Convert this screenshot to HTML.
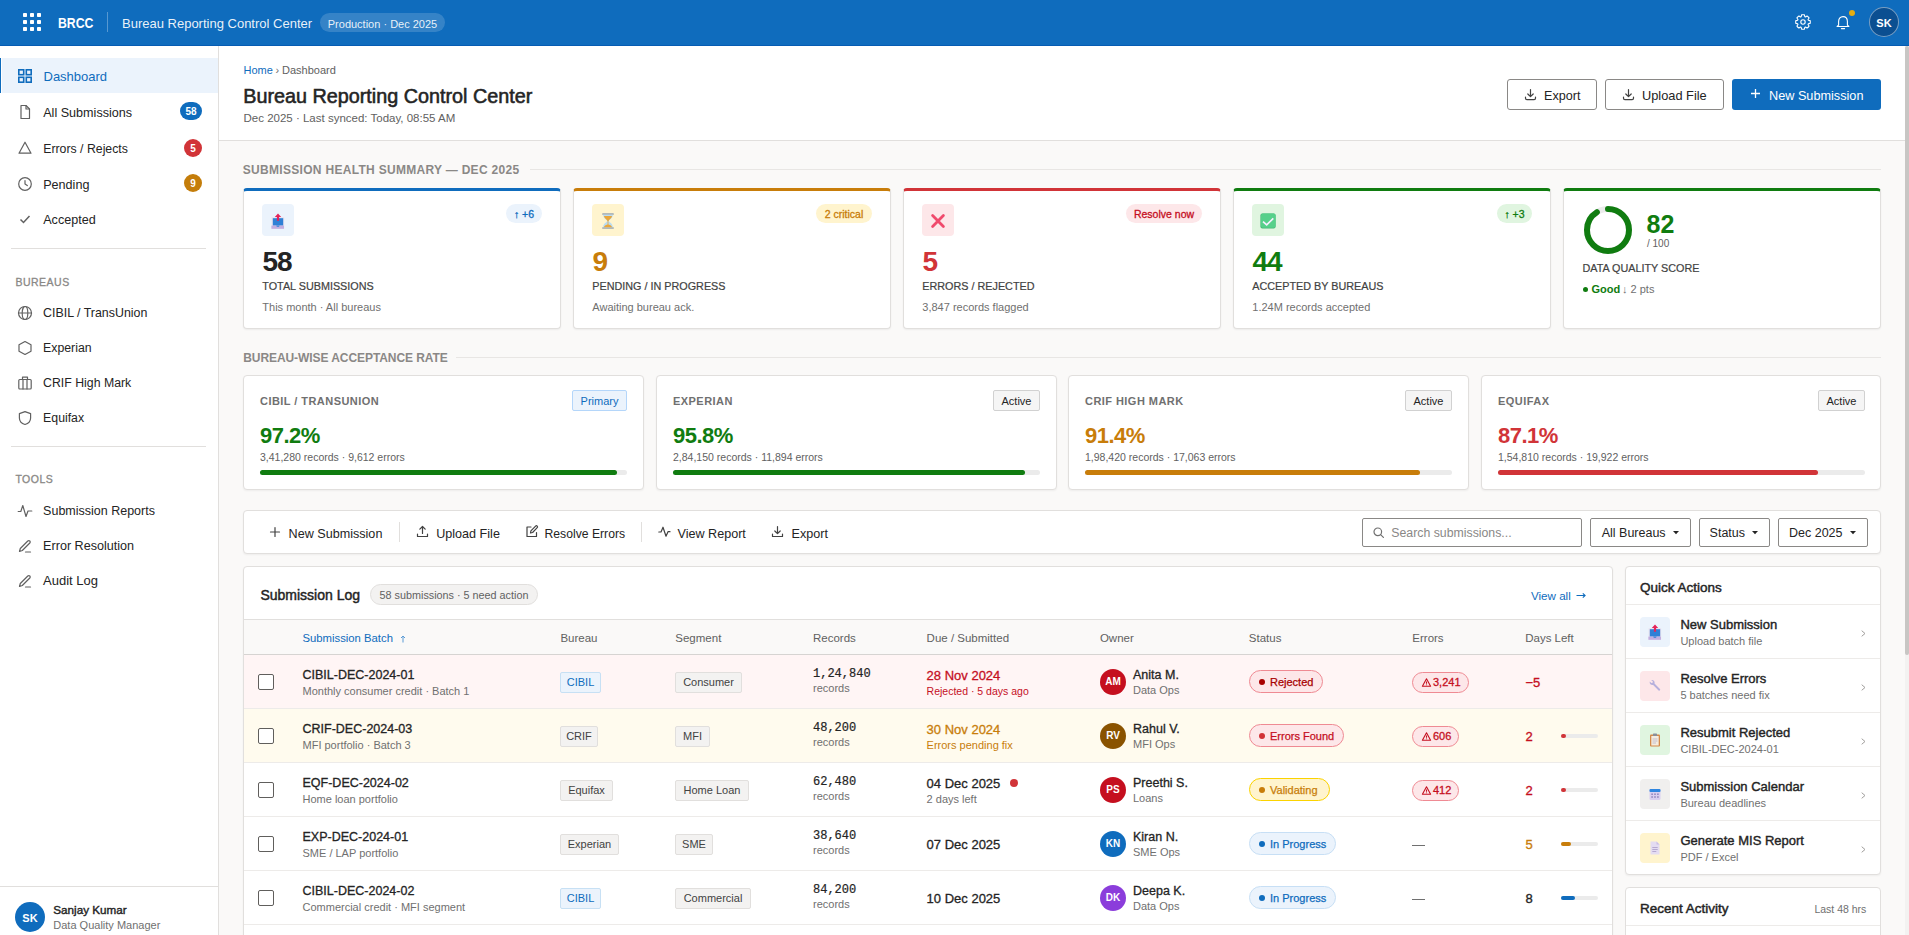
<!DOCTYPE html>
<html><head><meta charset="utf-8"><title>BRCC</title>
<style>
html,body{margin:0;padding:0;}
body{width:1909px;height:935px;overflow:hidden;position:relative;background:#faf9f8;font-family:'Liberation Sans',sans-serif;color:#242424;}
.t{position:absolute;white-space:nowrap;}
.b{position:absolute;box-sizing:border-box;}
svg.b{box-sizing:content-box;overflow:visible;}
</style></head><body>
<div class="b" style="left:0px;top:0px;width:1909px;height:46px;background:#0f6cbd;border-bottom:1px solid #065cb3;"></div><svg class="b" style="left:23px;top:13px;" width="18" height="18" viewBox="0 0 18 18" fill="none"><rect x="0" y="0" width="4" height="4" rx="0.8" fill="#fff"/><rect x="0" y="7" width="4" height="4" rx="0.8" fill="#fff"/><rect x="0" y="14" width="4" height="4" rx="0.8" fill="#fff"/><rect x="7" y="0" width="4" height="4" rx="0.8" fill="#fff"/><rect x="7" y="7" width="4" height="4" rx="0.8" fill="#fff"/><rect x="7" y="14" width="4" height="4" rx="0.8" fill="#fff"/><rect x="14" y="0" width="4" height="4" rx="0.8" fill="#fff"/><rect x="14" y="7" width="4" height="4" rx="0.8" fill="#fff"/><rect x="14" y="14" width="4" height="4" rx="0.8" fill="#fff"/></svg><div class="t" style="left:58.00px;top:15.08px;font-size:15.5px;line-height:15.5px;color:#fff;font-weight:700;transform:scaleX(0.79);transform-origin:0 0;">BRCC</div><div class="b" style="left:107px;top:12px;width:1px;height:20px;background:rgba(255,255,255,0.3);"></div><div class="t" style="left:122.00px;top:16.90px;font-size:13px;line-height:13px;color:rgba(255,255,255,0.92);">Bureau Reporting Control Center</div><div class="b" style="left:320px;top:13px;width:125px;height:19px;background:rgba(255,255,255,0.16);border-radius:9.5px;font-size:11px;line-height:19px;color:rgba(255,255,255,0.9);text-align:center;white-space:nowrap;"><span style="position:relative;top:1.5px">Production · Dec 2025</span></div><svg class="b" style="left:1795px;top:14px;" width="16" height="16" viewBox="0 0 16 16" fill="none"><g stroke="#fff" stroke-width="1.1" fill="none" stroke-linejoin="round"><path d="M6.61 0.83A7.3 7.3 0 0 1 9.39 0.83L9.82 2.71A5.6 5.6 0 0 1 10.45 2.97L12.08 1.95A7.3 7.3 0 0 1 14.05 3.92L13.03 5.55A5.6 5.6 0 0 1 13.29 6.18L15.17 6.61A7.3 7.3 0 0 1 15.17 9.39L13.29 9.82A5.6 5.6 0 0 1 13.03 10.45L14.05 12.08A7.3 7.3 0 0 1 12.08 14.05L10.45 13.03A5.6 5.6 0 0 1 9.82 13.29L9.39 15.17A7.3 7.3 0 0 1 6.61 15.17L6.18 13.29A5.6 5.6 0 0 1 5.55 13.03L3.92 14.05A7.3 7.3 0 0 1 1.95 12.08L2.97 10.45A5.6 5.6 0 0 1 2.71 9.82L0.83 9.39A7.3 7.3 0 0 1 0.83 6.61L2.71 6.18A5.6 5.6 0 0 1 2.97 5.55L1.95 3.92A7.3 7.3 0 0 1 3.92 1.95L5.55 2.97A5.6 5.6 0 0 1 6.18 2.71L6.61 0.83Z"/><circle cx="8" cy="8" r="2.2"/></g></svg><svg class="b" style="left:1835px;top:14px;" width="16" height="16" viewBox="0 0 16 16" fill="none"><g stroke="#fff" stroke-width="1.1" fill="none" stroke-linejoin="round" stroke-linecap="round"><path d="M3.6 11.2V7.6C3.6 4.6 5.5 2.6 8 2.6s4.4 2 4.4 5v3.6l1.5 1.3H2.1z"/><path d="M6.4 14.6h3.2"/></g></svg><div class="b" style="left:1849px;top:10px;width:6px;height:6px;background:#e5ad10;border-radius:50%;"></div><div class="b" style="left:1869px;top:7px;width:30px;height:30px;background:#0b4f91;border-radius:15.0px;border:1px solid rgba(255,255,255,0.45);box-sizing:border-box;font-size:11px;line-height:28px;color:#fff;text-align:center;white-space:nowrap;font-weight:700;"><span style="position:relative;top:1px">SK</span></div><div class="b" style="left:0px;top:46px;width:219px;height:889px;background:#fff;border-right:1px solid #e1dfdd;"></div><div class="b" style="left:2px;top:58px;width:216px;height:35px;background:#ebf3fc;"></div><div class="b" style="left:0px;top:58px;width:1.3px;height:35px;background:#0f6cbd;"></div><svg class="b" style="left:18px;top:69px;" width="14" height="14" viewBox="0 0 14 14" fill="none"><g fill="none" stroke="#0f6cbd" stroke-width="1.6"><rect x="0.8" y="0.8" width="4.9" height="4.9"/><rect x="8.3" y="0.8" width="4.9" height="4.9"/><rect x="0.8" y="8.3" width="4.9" height="4.9"/><rect x="8.3" y="8.3" width="4.9" height="4.9"/></g></svg><div class="t" style="left:43.50px;top:70.20px;font-size:13px;line-height:13px;color:#0f6cbd;">Dashboard</div><svg class="b" style="left:17px;top:104px;" width="16" height="16" viewBox="0 0 16 16" fill="none"><g stroke="#616161" stroke-width="1.2" fill="none" stroke-linejoin="round" stroke-linecap="round"><path d="M4 1.5h5l3.5 3.5v9.5H4z"/><path d="M9 1.5V5h3.5"/></g></svg><div class="t" style="left:43.20px;top:107.13px;font-size:12.6px;line-height:12.6px;color:#242424;">All Submissions</div><div class="b" style="left:180px;top:102px;width:22px;height:18px;background:#0f6cbd;border-radius:9.0px;font-size:10px;line-height:18px;color:#fff;text-align:center;white-space:nowrap;font-weight:700;"><span style="position:relative;top:1px">58</span></div><svg class="b" style="left:17px;top:140px;" width="16" height="16" viewBox="0 0 16 16" fill="none"><g stroke="#616161" stroke-width="1.2" fill="none" stroke-linejoin="round" stroke-linecap="round"><path d="M8 2.2l6 11H2z"/></g></svg><div class="t" style="left:43.20px;top:143.19px;font-size:12.3px;line-height:12.3px;color:#242424;">Errors / Rejects</div><div class="b" style="left:184px;top:138.5px;width:18px;height:18px;background:#d13438;border-radius:9.0px;font-size:10px;line-height:18px;color:#fff;text-align:center;white-space:nowrap;font-weight:700;"><span style="position:relative;top:1px">5</span></div><svg class="b" style="left:17px;top:176px;" width="16" height="16" viewBox="0 0 16 16" fill="none"><g stroke="#616161" stroke-width="1.2" fill="none" stroke-linejoin="round" stroke-linecap="round"><circle cx="8" cy="8" r="6.3"/><path d="M8 4.5V8l2.3 1.6"/></g></svg><div class="t" style="left:43.20px;top:178.73px;font-size:12.6px;line-height:12.6px;color:#242424;">Pending</div><div class="b" style="left:184px;top:174px;width:18px;height:18px;background:#c47d0a;border-radius:9.0px;font-size:10px;line-height:18px;color:#fff;text-align:center;white-space:nowrap;font-weight:700;"><span style="position:relative;top:1px">9</span></div><svg class="b" style="left:17px;top:211px;" width="16" height="16" viewBox="0 0 16 16" fill="none"><path d="M3.5 8.5l3 3 6-6.5" stroke="#616161" stroke-width="1.5" fill="none"/></svg><div class="t" style="left:43.20px;top:214.03px;font-size:12.6px;line-height:12.6px;color:#242424;">Accepted</div><div class="b" style="left:11px;top:248px;width:195px;height:1px;background:#e1dfdd;"></div><div class="t" style="left:15.40px;top:276.51px;font-size:10.5px;line-height:10.5px;color:#8a8886;letter-spacing:0.5px;-webkit-text-stroke:0.3px #8a8886;">BUREAUS</div><svg class="b" style="left:17px;top:305px;" width="16" height="16" viewBox="0 0 16 16" fill="none"><g stroke="#616161" stroke-width="1.2" fill="none" stroke-linejoin="round" stroke-linecap="round"><circle cx="8" cy="8" r="6.5"/><path d="M1.5 8h13"/><ellipse cx="8" cy="8" rx="2.8" ry="6.5"/></g></svg><div class="t" style="left:43.10px;top:306.70px;font-size:12.4px;line-height:12.4px;color:#242424;">CIBIL / TransUnion</div><svg class="b" style="left:17px;top:340px;" width="16" height="16" viewBox="0 0 16 16" fill="none"><g stroke="#616161" stroke-width="1.2" fill="none" stroke-linejoin="round" stroke-linecap="round"><path d="M8 1.5l6 3.3v6.4l-6 3.3-6-3.3V4.8z"/></g></svg><div class="t" style="left:43.10px;top:341.79px;font-size:12.3px;line-height:12.3px;color:#242424;">Experian</div><svg class="b" style="left:17px;top:375px;" width="16" height="16" viewBox="0 0 16 16" fill="none"><g stroke="#616161" stroke-width="1.2" fill="none" stroke-linejoin="round" stroke-linecap="round"><rect x="1.8" y="4.5" width="12.4" height="9.5" rx="1"/><path d="M5.5 4.5V2.2h5v2.3M6 4.5v9.5M10 4.5v9.5"/></g></svg><div class="t" style="left:43.10px;top:376.79px;font-size:12.3px;line-height:12.3px;color:#242424;">CRIF High Mark</div><svg class="b" style="left:17px;top:410px;" width="16" height="16" viewBox="0 0 16 16" fill="none"><g stroke="#616161" stroke-width="1.2" fill="none" stroke-linejoin="round" stroke-linecap="round"><path d="M8 1.6l5.6 2v4.3c0 3.3-2.5 5.6-5.6 6.6-3.1-1-5.6-3.3-5.6-6.6V3.6z"/></g></svg><div class="t" style="left:43.10px;top:411.79px;font-size:12.3px;line-height:12.3px;color:#242424;">Equifax</div><div class="b" style="left:11px;top:446px;width:195px;height:1px;background:#e1dfdd;"></div><div class="t" style="left:15.40px;top:474.11px;font-size:10.5px;line-height:10.5px;color:#8a8886;letter-spacing:0.5px;-webkit-text-stroke:0.3px #8a8886;">TOOLS</div><svg class="b" style="left:17px;top:503px;" width="16" height="16" viewBox="0 0 16 16" fill="none"><g stroke="#616161" stroke-width="1.2" fill="none" stroke-linejoin="round" stroke-linecap="round"><path d="M1.2 8.5h2.6l2-6 3.2 11 2-5.5h3.8"/></g></svg><div class="t" style="left:43.10px;top:504.62px;font-size:12.5px;line-height:12.5px;color:#242424;">Submission Reports</div><svg class="b" style="left:17px;top:538px;" width="16" height="16" viewBox="0 0 16 16" fill="none"><g stroke="#616161" stroke-width="1.2" fill="none" stroke-linejoin="round" stroke-linecap="round"><path d="M2.5 13.5l.8-3L10.8 3a1.4 1.4 0 0 1 2 2l-7.5 7.5z"/><path d="M8.5 14h5"/></g></svg><div class="t" style="left:43.10px;top:539.63px;font-size:12.6px;line-height:12.6px;color:#242424;">Error Resolution</div><svg class="b" style="left:17px;top:573px;" width="16" height="16" viewBox="0 0 16 16" fill="none"><g stroke="#616161" stroke-width="1.2" fill="none" stroke-linejoin="round" stroke-linecap="round"><path d="M2.5 13.5l.8-3L10.8 3a1.4 1.4 0 0 1 2 2l-7.5 7.5z"/><path d="M8.5 14h5"/></g></svg><div class="t" style="left:43.10px;top:574.20px;font-size:13px;line-height:13px;color:#242424;">Audit Log</div><div class="b" style="left:0px;top:886px;width:218px;height:1px;background:#e1dfdd;"></div><div class="b" style="left:15px;top:901.5px;width:30px;height:30px;background:#0f6cbd;border-radius:15.0px;font-size:11px;line-height:30px;color:#fff;text-align:center;white-space:nowrap;font-weight:700;"><span style="position:relative;top:1px">SK</span></div><div class="t" style="left:53.30px;top:903.90px;font-size:11.7px;line-height:11.7px;color:#242424;-webkit-text-stroke:0.4px #242424;">Sanjay Kumar</div><div class="t" style="left:53.30px;top:919.69px;font-size:11px;line-height:11px;color:#707070;">Data Quality Manager</div><div class="b" style="left:219px;top:46px;width:1686px;height:95px;background:#fff;border-bottom:1px solid #e1dfdd;"></div><div class="t" style="left:243.50px;top:64.69px;font-size:11px;line-height:11px;color:#0f6cbd;">Home</div><div class="t" style="left:275.50px;top:64.69px;font-size:11px;line-height:11px;color:#707070;">›</div><div class="t" style="left:282.00px;top:64.69px;font-size:11px;line-height:11px;color:#616161;">Dashboard</div><div class="t" style="left:243.20px;top:87.04px;font-size:19.8px;line-height:19.8px;color:#242424;-webkit-text-stroke:0.55px #242424;">Bureau Reporting Control Center</div><div class="t" style="left:243.50px;top:113.47px;font-size:11.5px;line-height:11.5px;color:#616161;">Dec 2025 · Last synced: Today, 08:55 AM</div><div class="b" style="left:1507px;top:79px;width:90px;height:31px;border:1px solid #8a8886;border-radius:3px;background:#fff;"></div><svg class="b" style="left:1524px;top:87.5px;" width="13" height="13" viewBox="0 0 13 13" fill="none"><g stroke="#424242" stroke-width="1.2" fill="none" stroke-linecap="round" stroke-linejoin="round"><path d="M6.5 1.5v7M3.8 6l2.7 2.7L9.2 6M1.5 9v1.3a1.4 1.4 0 0 0 1.4 1.4h7.2a1.4 1.4 0 0 0 1.4-1.4V9"/></g></svg><div class="t" style="left:1544.00px;top:89.83px;font-size:12.6px;line-height:12.6px;color:#242424;">Export</div><div class="b" style="left:1605px;top:79px;width:119px;height:31px;border:1px solid #8a8886;border-radius:3px;background:#fff;"></div><svg class="b" style="left:1622px;top:87.5px;" width="13" height="13" viewBox="0 0 13 13" fill="none"><g stroke="#424242" stroke-width="1.2" fill="none" stroke-linecap="round" stroke-linejoin="round"><path d="M6.5 1.5v7M3.8 6l2.7 2.7L9.2 6M1.5 9v1.3a1.4 1.4 0 0 0 1.4 1.4h7.2a1.4 1.4 0 0 0 1.4-1.4V9"/></g></svg><div class="t" style="left:1642.00px;top:89.66px;font-size:12.8px;line-height:12.8px;color:#242424;">Upload File</div><div class="b" style="left:1732px;top:79px;width:149px;height:31px;background:#0f6cbd;border-radius:3px;"></div><svg class="b" style="left:1750px;top:88px;" width="11" height="11" viewBox="0 0 11 11" fill="none"><path d="M5.5 1v9M1 5.5h9" stroke="#fff" stroke-width="1.3"/></svg><div class="t" style="left:1769.00px;top:89.75px;font-size:12.7px;line-height:12.7px;color:#fff;">New Submission</div><div class="b" style="left:1905px;top:46px;width:4px;height:889px;background:#f3f2f1;"></div><div class="b" style="left:1905px;top:46px;width:4px;height:609px;background:#c8c6c4;border-radius:3px;"></div><div class="t" style="left:242.80px;top:164.04px;font-size:12px;line-height:12px;color:#8a8886;font-weight:700;letter-spacing:0.3px;">SUBMISSION HEALTH SUMMARY — DEC 2025</div><div class="b" style="left:530px;top:169px;width:1351px;height:1px;background:#e8e6e4;"></div><div class="b" style="left:243px;top:188px;width:318px;height:141px;background:#fff;border:1px solid #e1dfdd;border-top:3px solid #0f6cbd;border-radius:4px;box-shadow:0 1px 2px rgba(0,0,0,0.06);"></div><div class="b" style="left:262px;top:204px;width:32px;height:32px;background:#ebf3fc;border-radius:4px;"></div><svg class="b" style="left:270px;top:213px;" width="16" height="16" viewBox="0 0 16 16" fill="none"><path d="M1.6 4.2h12.6v11.6H1.6z" fill="#e9e2ef"/><path d="M2.8 5.2h10.4v7.4H2.8z" fill="#2f80d6"/><path d="M1.4 12.6h12.6v3.2H1.4z" fill="#c2aee0"/><path d="M6.2 12.6h3.4l-.6 1.2H6.8z" fill="#2f80d6"/><path d="M8 0.6l3.2 3.4H9.1v3.8H6.9V4H4.8z" fill="#e4245a"/></svg><div class="b" style="left:506px;top:204px;width:36px;height:19px;background:#ebf3fc;border-radius:9.5px;font-size:10.5px;line-height:19px;color:#0f6cbd;text-align:center;white-space:nowrap;-webkit-text-stroke:0.3px #0f6cbd;"><span style="position:relative;top:1px">↑ +6</span></div><div class="t" style="left:262.50px;top:247.60px;font-size:28px;line-height:28px;color:#242424;font-weight:700;letter-spacing:-1px;">58</div><div class="t" style="left:262.30px;top:281.16px;font-size:10.8px;line-height:10.8px;color:#424242;-webkit-text-stroke:0.2px #424242;">TOTAL SUBMISSIONS</div><div class="t" style="left:262.30px;top:301.79px;font-size:11px;line-height:11px;color:#707070;">This month · All bureaus</div><div class="b" style="left:573px;top:188px;width:318px;height:141px;background:#fff;border:1px solid #e1dfdd;border-top:3px solid #c87d0a;border-radius:4px;box-shadow:0 1px 2px rgba(0,0,0,0.06);"></div><div class="b" style="left:592px;top:204px;width:32px;height:32px;background:#fff4ce;border-radius:4px;"></div><svg class="b" style="left:600px;top:213px;" width="16" height="16" viewBox="0 0 16 16" fill="none"><rect x="2.2" y="0.3" width="11.6" height="1.5" rx=".5" fill="#9aa5b1"/><rect x="2.2" y="14.2" width="11.6" height="1.5" rx=".5" fill="#9aa5b1"/><path d="M3.2 1.8h9.6c0 3.6-3.2 4.8-4.2 6.2h-1.2C6.4 6.6 3.2 5.4 3.2 1.8z" fill="#b9dcf2"/><path d="M3.9 3h8.2c-.4 2.2-2.8 3.4-3.7 4.9h-.8C6.7 6.4 4.3 5.2 3.9 3z" fill="#eaa63a"/><path d="M3.2 14.2h9.6c0-3.6-3.2-4.8-4.2-6.2h-1.2C6.4 9.4 3.2 10.6 3.2 14.2z" fill="#b9dcf2"/><path d="M3.8 14.2h8.4c-.6-1.6-2.4-2.6-4.2-2.8-1.8.2-3.6 1.2-4.2 2.8z" fill="#eaa63a"/><rect x="7.6" y="7.5" width=".8" height="4.5" fill="#eaa63a"/></svg><div class="b" style="left:816px;top:204px;width:56px;height:19px;background:#fff4ce;border-radius:9.5px;font-size:10.5px;line-height:19px;color:#c87d0a;text-align:center;white-space:nowrap;-webkit-text-stroke:0.3px #c87d0a;"><span style="position:relative;top:1px">2 critical</span></div><div class="t" style="left:592.50px;top:247.60px;font-size:28px;line-height:28px;color:#c87d0a;font-weight:700;letter-spacing:-1px;">9</div><div class="t" style="left:592.30px;top:281.16px;font-size:10.8px;line-height:10.8px;color:#424242;-webkit-text-stroke:0.2px #424242;">PENDING / IN PROGRESS</div><div class="t" style="left:592.30px;top:301.79px;font-size:11px;line-height:11px;color:#707070;">Awaiting bureau ack.</div><div class="b" style="left:903px;top:188px;width:318px;height:141px;background:#fff;border:1px solid #e1dfdd;border-top:3px solid #d13438;border-radius:4px;box-shadow:0 1px 2px rgba(0,0,0,0.06);"></div><div class="b" style="left:922px;top:204px;width:32px;height:32px;background:#fde7e9;border-radius:4px;"></div><svg class="b" style="left:930px;top:213px;" width="16" height="16" viewBox="0 0 16 16" fill="none"><path d="M2.6 2.6l10.8 10.8M13.4 2.6L2.6 13.4" stroke="#f04a6c" stroke-width="2.8" stroke-linecap="round"/></svg><div class="b" style="left:1126px;top:204px;width:76px;height:19px;background:#fde7e9;border-radius:9.5px;font-size:10.5px;line-height:19px;color:#c50f1f;text-align:center;white-space:nowrap;-webkit-text-stroke:0.3px #c50f1f;"><span style="position:relative;top:1px">Resolve now</span></div><div class="t" style="left:922.50px;top:247.60px;font-size:28px;line-height:28px;color:#d13438;font-weight:700;letter-spacing:-1px;">5</div><div class="t" style="left:922.30px;top:281.16px;font-size:10.8px;line-height:10.8px;color:#424242;-webkit-text-stroke:0.2px #424242;">ERRORS / REJECTED</div><div class="t" style="left:922.30px;top:301.79px;font-size:11px;line-height:11px;color:#707070;">3,847 records flagged</div><div class="b" style="left:1233px;top:188px;width:318px;height:141px;background:#fff;border:1px solid #e1dfdd;border-top:3px solid #107c10;border-radius:4px;box-shadow:0 1px 2px rgba(0,0,0,0.06);"></div><div class="b" style="left:1252px;top:204px;width:32px;height:32px;background:#e0f5e0;border-radius:4px;"></div><svg class="b" style="left:1260px;top:213px;" width="16" height="16" viewBox="0 0 16 16" fill="none"><rect x="0.4" y="0.4" width="15.2" height="15.2" rx="2" fill="#45b874"/><rect x="1" y="0.4" width="14.6" height="14.4" rx="2" fill="#56d08a"/><path d="M3 8.6l3.7 3.3 6.6-6.6" stroke="#f7eeff" stroke-width="1.7" fill="none"/></svg><div class="b" style="left:1497px;top:204px;width:35px;height:19px;background:#e0f5e0;border-radius:9.5px;font-size:10.5px;line-height:19px;color:#107c10;text-align:center;white-space:nowrap;-webkit-text-stroke:0.3px #107c10;"><span style="position:relative;top:1px">↑ +3</span></div><div class="t" style="left:1252.50px;top:247.60px;font-size:28px;line-height:28px;color:#107c10;font-weight:700;letter-spacing:-1px;">44</div><div class="t" style="left:1252.30px;top:281.16px;font-size:10.8px;line-height:10.8px;color:#424242;-webkit-text-stroke:0.2px #424242;">ACCEPTED BY BUREAUS</div><div class="t" style="left:1252.30px;top:301.79px;font-size:11px;line-height:11px;color:#707070;">1.24M records accepted</div><div class="b" style="left:1563px;top:188px;width:318px;height:141px;background:#fff;border:1px solid #e1dfdd;border-top:3px solid #107c10;border-radius:4px;box-shadow:0 1px 2px rgba(0,0,0,0.06);"></div><svg class="b" style="left:1584px;top:206px;" width="48" height="48" viewBox="0 0 48 48" fill="none"><circle cx="24" cy="24" r="21" stroke="#ebebeb" stroke-width="6"/><circle cx="24" cy="24" r="21" stroke="#107c10" stroke-width="6" stroke-linecap="round" stroke-dasharray="119.41 131.95" transform="rotate(-90 24 24)"/></svg><div class="t" style="left:1646.50px;top:212.04px;font-size:25px;line-height:25px;color:#107c10;font-weight:700;">82</div><div class="t" style="left:1647.00px;top:238.84px;font-size:10px;line-height:10px;color:#616161;">/ 100</div><div class="t" style="left:1582.50px;top:263.16px;font-size:10.8px;line-height:10.8px;color:#424242;-webkit-text-stroke:0.2px #424242;">DATA QUALITY SCORE</div><div class="b" style="left:1583px;top:287px;width:5px;height:5px;background:#107c10;border-radius:50%;"></div><div class="t" style="left:1591.50px;top:283.69px;font-size:11px;line-height:11px;color:#107c10;font-weight:700;">Good</div><div class="t" style="left:1622.00px;top:283.69px;font-size:11px;line-height:11px;color:#707070;">↓ 2 pts</div><div class="t" style="left:243.20px;top:352.14px;font-size:12px;line-height:12px;color:#8a8886;font-weight:700;letter-spacing:-0.07px;">BUREAU-WISE ACCEPTANCE RATE</div><div class="b" style="left:456px;top:357px;width:1425px;height:1px;background:#e8e6e4;"></div><div class="b" style="left:243px;top:375px;width:401px;height:115px;background:#fff;border:1px solid #e1dfdd;border-radius:4px;box-shadow:0 1px 2px rgba(0,0,0,0.05);"></div><div class="t" style="left:260.00px;top:396.09px;font-size:11px;line-height:11px;color:#707070;font-weight:700;letter-spacing:0.45px;">CIBIL / TRANSUNION</div><div class="b" style="left:572px;top:390px;width:55px;height:21px;background:#ebf3fc;border-radius:2px;border:1px solid #b4d6fa;box-sizing:border-box;font-size:11px;line-height:19px;color:#0f6cbd;text-align:center;white-space:nowrap;"><span style="position:relative;top:0.5px">Primary</span></div><div class="t" style="left:260.00px;top:424.58px;font-size:22px;line-height:22px;color:#107c10;font-weight:700;letter-spacing:-0.5px;">97.2%</div><div class="t" style="left:260.00px;top:452.11px;font-size:10.5px;line-height:10.5px;color:#616161;">3,41,280 records · 9,612 errors</div><div class="b" style="left:260px;top:470px;width:367px;height:5px;background:#ebebeb;border-radius:3px;"></div><div class="b" style="left:260px;top:470px;width:356.7px;height:5px;background:#107c10;border-radius:3px;"></div><div class="b" style="left:656px;top:375px;width:401px;height:115px;background:#fff;border:1px solid #e1dfdd;border-radius:4px;box-shadow:0 1px 2px rgba(0,0,0,0.05);"></div><div class="t" style="left:673.00px;top:396.09px;font-size:11px;line-height:11px;color:#707070;font-weight:700;letter-spacing:0.45px;">EXPERIAN</div><div class="b" style="left:993px;top:390px;width:47px;height:21px;background:#f5f5f5;border-radius:2px;border:1px solid #d1d1d1;box-sizing:border-box;font-size:11px;line-height:19px;color:#242424;text-align:center;white-space:nowrap;"><span style="position:relative;top:0.5px">Active</span></div><div class="t" style="left:673.00px;top:424.58px;font-size:22px;line-height:22px;color:#107c10;font-weight:700;letter-spacing:-0.5px;">95.8%</div><div class="t" style="left:673.00px;top:452.11px;font-size:10.5px;line-height:10.5px;color:#616161;">2,84,150 records · 11,894 errors</div><div class="b" style="left:673px;top:470px;width:367px;height:5px;background:#ebebeb;border-radius:3px;"></div><div class="b" style="left:673px;top:470px;width:351.6px;height:5px;background:#107c10;border-radius:3px;"></div><div class="b" style="left:1068px;top:375px;width:401px;height:115px;background:#fff;border:1px solid #e1dfdd;border-radius:4px;box-shadow:0 1px 2px rgba(0,0,0,0.05);"></div><div class="t" style="left:1085.00px;top:396.09px;font-size:11px;line-height:11px;color:#707070;font-weight:700;letter-spacing:0.45px;">CRIF HIGH MARK</div><div class="b" style="left:1405px;top:390px;width:47px;height:21px;background:#f5f5f5;border-radius:2px;border:1px solid #d1d1d1;box-sizing:border-box;font-size:11px;line-height:19px;color:#242424;text-align:center;white-space:nowrap;"><span style="position:relative;top:0.5px">Active</span></div><div class="t" style="left:1085.00px;top:424.58px;font-size:22px;line-height:22px;color:#c87d0a;font-weight:700;letter-spacing:-0.5px;">91.4%</div><div class="t" style="left:1085.00px;top:452.11px;font-size:10.5px;line-height:10.5px;color:#616161;">1,98,420 records · 17,063 errors</div><div class="b" style="left:1085px;top:470px;width:367px;height:5px;background:#ebebeb;border-radius:3px;"></div><div class="b" style="left:1085px;top:470px;width:335.4px;height:5px;background:#c87d0a;border-radius:3px;"></div><div class="b" style="left:1481px;top:375px;width:400px;height:115px;background:#fff;border:1px solid #e1dfdd;border-radius:4px;box-shadow:0 1px 2px rgba(0,0,0,0.05);"></div><div class="t" style="left:1498.00px;top:396.09px;font-size:11px;line-height:11px;color:#707070;font-weight:700;letter-spacing:0.45px;">EQUIFAX</div><div class="b" style="left:1818px;top:390px;width:47px;height:21px;background:#f5f5f5;border-radius:2px;border:1px solid #d1d1d1;box-sizing:border-box;font-size:11px;line-height:19px;color:#242424;text-align:center;white-space:nowrap;"><span style="position:relative;top:0.5px">Active</span></div><div class="t" style="left:1498.00px;top:424.58px;font-size:22px;line-height:22px;color:#d13438;font-weight:700;letter-spacing:-0.5px;">87.1%</div><div class="t" style="left:1498.00px;top:452.11px;font-size:10.5px;line-height:10.5px;color:#616161;">1,54,810 records · 19,922 errors</div><div class="b" style="left:1498px;top:470px;width:367px;height:5px;background:#ebebeb;border-radius:3px;"></div><div class="b" style="left:1498px;top:470px;width:319.7px;height:5px;background:#d13438;border-radius:3px;"></div><div class="b" style="left:243px;top:510px;width:1638px;height:44px;background:#fff;border:1px solid #e1dfdd;border-radius:4px;box-shadow:0 1px 2px rgba(0,0,0,0.05);"></div><svg class="b" style="left:270px;top:527px;" width="10" height="10" viewBox="0 0 10 10" fill="none"><g stroke="#424242" stroke-width="1.2" fill="none" stroke-linecap="round" stroke-linejoin="round"><path d="M5 0.5v9M0.5 5h9"/></g></svg><div class="t" style="left:288.60px;top:527.63px;font-size:12.6px;line-height:12.6px;color:#242424;">New Submission</div><div class="b" style="left:399px;top:522px;width:1px;height:20px;background:#e1dfdd;"></div><svg class="b" style="left:416px;top:525px;" width="13" height="13" viewBox="0 0 13 13" fill="none"><g stroke="#424242" stroke-width="1.2" fill="none" stroke-linecap="round" stroke-linejoin="round"><path d="M6.5 8.5v-7M3.8 4.2L6.5 1.5l2.7 2.7M1.5 9v2.5h10V9"/></g></svg><div class="t" style="left:436.20px;top:527.63px;font-size:12.6px;line-height:12.6px;color:#242424;">Upload File</div><svg class="b" style="left:525px;top:525px;" width="13" height="13" viewBox="0 0 13 13" fill="none"><g stroke="#424242" stroke-width="1.2" fill="none" stroke-linecap="round" stroke-linejoin="round"><path d="M6 2H2v9.5h9.5V7.5"/><path d="M5.5 8l.4-2.2L10.6 1.1a1.1 1.1 0 0 1 1.6 1.6L7.6 7.5z"/></g></svg><div class="t" style="left:544.50px;top:527.97px;font-size:12.2px;line-height:12.2px;color:#242424;">Resolve Errors</div><div class="b" style="left:641px;top:522px;width:1px;height:20px;background:#e1dfdd;"></div><svg class="b" style="left:658px;top:525px;" width="13" height="13" viewBox="0 0 13 13" fill="none"><g stroke="#424242" stroke-width="1.2" fill="none" stroke-linecap="round" stroke-linejoin="round"><path d="M0.8 7h2.2L5 2.2l3 9 2-4.5h2"/></g></svg><div class="t" style="left:677.50px;top:527.63px;font-size:12.6px;line-height:12.6px;color:#242424;">View Report</div><svg class="b" style="left:771px;top:525px;" width="13" height="13" viewBox="0 0 13 13" fill="none"><g stroke="#424242" stroke-width="1.2" fill="none" stroke-linecap="round" stroke-linejoin="round"><path d="M6.5 1.5v7M3.8 6l2.7 2.7L9.2 6M1.5 9v2.5h10V9"/></g></svg><div class="t" style="left:791.50px;top:527.63px;font-size:12.6px;line-height:12.6px;color:#242424;">Export</div><div class="b" style="left:1362px;top:518px;width:220px;height:29px;border:1px solid #8a8886;border-radius:2px;background:#fff;"></div><svg class="b" style="left:1373px;top:527px;" width="11" height="11" viewBox="0 0 11 11" fill="none"><g stroke="#707070" stroke-width="1.2" fill="none"><circle cx="4.8" cy="4.8" r="3.8"/><path d="M7.6 7.6l2.8 2.8" stroke-linecap="round"/></g></svg><div class="t" style="left:1391.30px;top:526.89px;font-size:12.3px;line-height:12.3px;color:#8a8886;">Search submissions...</div><div class="b" style="left:1590px;top:518px;width:101px;height:29px;border:1px solid #8a8886;border-radius:2px;background:#fff;"></div><div class="t" style="left:1601.70px;top:526.72px;font-size:12.5px;line-height:12.5px;color:#242424;">All Bureaus</div><svg class="b" style="left:1673px;top:531px;" width="6" height="4" viewBox="0 0 6 4" fill="none"><path d="M0 0h6L3 3.2z" fill="#242424"/></svg><div class="b" style="left:1699px;top:518px;width:71px;height:29px;border:1px solid #8a8886;border-radius:2px;background:#fff;"></div><div class="t" style="left:1709.60px;top:526.72px;font-size:12.5px;line-height:12.5px;color:#242424;">Status</div><svg class="b" style="left:1752px;top:531px;" width="6" height="4" viewBox="0 0 6 4" fill="none"><path d="M0 0h6L3 3.2z" fill="#242424"/></svg><div class="b" style="left:1778px;top:518px;width:90px;height:29px;border:1px solid #8a8886;border-radius:2px;background:#fff;"></div><div class="t" style="left:1789.00px;top:526.72px;font-size:12.5px;line-height:12.5px;color:#242424;">Dec 2025</div><svg class="b" style="left:1850px;top:531px;" width="6" height="4" viewBox="0 0 6 4" fill="none"><path d="M0 0h6L3 3.2z" fill="#242424"/></svg><div class="b" style="left:243px;top:566px;width:1370px;height:380px;background:#fff;border:1px solid #e1dfdd;border-radius:4px;box-shadow:0 1px 2px rgba(0,0,0,0.05);"></div><div class="t" style="left:260.40px;top:588.45px;font-size:14px;line-height:14px;color:#242424;-webkit-text-stroke:0.45px #242424;">Submission Log</div><div class="b" style="left:370px;top:584px;width:168px;height:21px;background:#f3f2f1;border-radius:10.5px;border:1px solid #e1dfdd;box-sizing:border-box;font-size:10.8px;line-height:19px;color:#616161;text-align:center;white-space:nowrap;"><span style="position:relative;top:1px">58 submissions · 5 need action</span></div><div class="t" style="left:1531.00px;top:589.68px;font-size:11.6px;line-height:11.6px;color:#0f6cbd;">View all</div><svg class="b" style="left:1576px;top:592px;" width="10" height="7" viewBox="0 0 10 7" fill="none"><path d="M0.5 3.5h8.6M6.8 1.3l2.3 2.2-2.3 2.2" stroke="#0f6cbd" stroke-width="1.1" fill="none"/></svg><div class="b" style="left:244px;top:619px;width:1368px;height:36px;background:#faf9f8;border-top:1px solid #e1dfdd;border-bottom:1px solid #d6d4d2;"></div><div class="t" style="left:302.50px;top:633.43px;font-size:11.3px;line-height:11.3px;color:#0f6cbd;">Submission Batch</div><svg class="b" style="left:400px;top:635px;" width="6" height="8" viewBox="0 0 6 8" fill="none"><path d="M3 7.5V1M1 3l2-2 2 2" stroke="#5b9bd5" stroke-width="1" fill="none"/></svg><div class="t" style="left:560.40px;top:633.27px;font-size:11.5px;line-height:11.5px;color:#616161;">Bureau</div><div class="t" style="left:675.30px;top:633.27px;font-size:11.5px;line-height:11.5px;color:#616161;">Segment</div><div class="t" style="left:813.00px;top:633.27px;font-size:11.5px;line-height:11.5px;color:#616161;">Records</div><div class="t" style="left:926.60px;top:633.27px;font-size:11.5px;line-height:11.5px;color:#616161;">Due / Submitted</div><div class="t" style="left:1099.90px;top:633.27px;font-size:11.5px;line-height:11.5px;color:#616161;">Owner</div><div class="t" style="left:1248.80px;top:633.27px;font-size:11.5px;line-height:11.5px;color:#616161;">Status</div><div class="t" style="left:1412.30px;top:633.27px;font-size:11.5px;line-height:11.5px;color:#616161;">Errors</div><div class="t" style="left:1525.20px;top:633.27px;font-size:11.5px;line-height:11.5px;color:#616161;">Days Left</div><div class="b" style="left:244px;top:655px;width:1368px;height:54px;background:#fff5f5;border-bottom:1px solid #edebe9;"></div><div class="b" style="left:258px;top:674px;width:16px;height:16px;border:1px solid #605e5c;border-radius:2px;background:#fff;"></div><div class="t" style="left:302.50px;top:668.62px;font-size:12.5px;line-height:12.5px;color:#242424;-webkit-text-stroke:0.3px #242424;">CIBIL-DEC-2024-01</div><div class="t" style="left:302.50px;top:685.89px;font-size:11px;line-height:11px;color:#707070;">Monthly consumer credit · Batch 1</div><div class="b" style="left:560px;top:672px;width:41px;height:21px;background:#ebf3fc;border-radius:2px;border:1px solid #c7e0f4;box-sizing:border-box;font-size:11px;line-height:19px;color:#0f6cbd;text-align:center;white-space:nowrap;">CIBIL</div><div class="b" style="left:675px;top:672px;width:67px;height:21px;background:#f3f2f1;border-radius:2px;border:1px solid #e1dfdd;box-sizing:border-box;font-size:11px;line-height:19px;color:#424242;text-align:center;white-space:nowrap;">Consumer</div><div class="t" style="left:813.00px;top:668.11px;font-size:12px;line-height:12px;color:#242424;font-family:'Liberation Mono',monospace;-webkit-text-stroke:0.2px #242424;">1,24,840</div><div class="t" style="left:813.00px;top:683.49px;font-size:11px;line-height:11px;color:#707070;">records</div><div class="t" style="left:926.60px;top:668.60px;font-size:13px;line-height:13px;color:#c50f1f;-webkit-text-stroke:0.3px #c50f1f;">28 Nov 2024</div><div class="t" style="left:926.60px;top:686.11px;font-size:10.5px;line-height:10.5px;color:#c50f1f;">Rejected · 5 days ago</div><div class="b" style="left:1100px;top:669px;width:26px;height:26px;background:#c50f1f;border-radius:13.0px;font-size:10px;line-height:26px;color:#fff;text-align:center;white-space:nowrap;font-weight:700;">AM</div><div class="t" style="left:1133.00px;top:668.62px;font-size:12.5px;line-height:12.5px;color:#242424;-webkit-text-stroke:0.3px #242424;">Anita M.</div><div class="t" style="left:1133.00px;top:685.09px;font-size:11px;line-height:11px;color:#707070;">Data Ops</div><div class="b" style="left:1249px;top:670px;width:74px;height:23px;background:#fde7e9;border:1px solid #ef8a93;border-radius:12px;"></div><div class="b" style="left:1259px;top:679px;width:6px;height:6px;background:#a80000;border-radius:50%;"></div><div class="t" style="left:1270.00px;top:676.69px;font-size:11px;line-height:11px;color:#a80000;-webkit-text-stroke:0.25px #a80000;">Rejected</div><div class="b" style="left:1412px;top:671.5px;width:57px;height:21px;background:#fde7e9;border:1px solid #ef8a93;border-radius:11px;"></div><svg class="b" style="left:1422px;top:677.5px;" width="9" height="9" viewBox="0 0 9 9" fill="none"><path d="M4.5 0.8L8.6 8.2H0.4z" fill="none" stroke="#c50f1f" stroke-width="1.1" stroke-linejoin="round"/><path d="M4.5 3.4v2.4M4.5 6.6v.7" stroke="#c50f1f" stroke-width="1.1"/></svg><div class="t" style="left:1433.00px;top:676.99px;font-size:11px;line-height:11px;color:#c50f1f;-webkit-text-stroke:0.3px #c50f1f;">3,241</div><div class="t" style="left:1525.50px;top:675.60px;font-size:13px;line-height:13px;color:#c50f1f;-webkit-text-stroke:0.35px #c50f1f;">−5</div><div class="b" style="left:244px;top:709px;width:1368px;height:54px;background:#fffbee;border-bottom:1px solid #edebe9;"></div><div class="b" style="left:258px;top:728px;width:16px;height:16px;border:1px solid #605e5c;border-radius:2px;background:#fff;"></div><div class="t" style="left:302.50px;top:722.62px;font-size:12.5px;line-height:12.5px;color:#242424;-webkit-text-stroke:0.3px #242424;">CRIF-DEC-2024-03</div><div class="t" style="left:302.50px;top:739.89px;font-size:11px;line-height:11px;color:#707070;">MFI portfolio · Batch 3</div><div class="b" style="left:560px;top:726px;width:38px;height:21px;background:#f3f2f1;border-radius:2px;border:1px solid #e1dfdd;box-sizing:border-box;font-size:11px;line-height:19px;color:#424242;text-align:center;white-space:nowrap;">CRIF</div><div class="b" style="left:675px;top:726px;width:35px;height:21px;background:#f3f2f1;border-radius:2px;border:1px solid #e1dfdd;box-sizing:border-box;font-size:11px;line-height:19px;color:#424242;text-align:center;white-space:nowrap;">MFI</div><div class="t" style="left:813.00px;top:722.11px;font-size:12px;line-height:12px;color:#242424;font-family:'Liberation Mono',monospace;-webkit-text-stroke:0.2px #242424;">48,200</div><div class="t" style="left:813.00px;top:737.49px;font-size:11px;line-height:11px;color:#707070;">records</div><div class="t" style="left:926.60px;top:722.60px;font-size:13px;line-height:13px;color:#c87d0a;-webkit-text-stroke:0.3px #c87d0a;">30 Nov 2024</div><div class="t" style="left:926.60px;top:739.69px;font-size:11px;line-height:11px;color:#c87d0a;">Errors pending fix</div><div class="b" style="left:1100px;top:723px;width:26px;height:26px;background:#8a5300;border-radius:13.0px;font-size:10px;line-height:26px;color:#fff;text-align:center;white-space:nowrap;font-weight:700;">RV</div><div class="t" style="left:1133.00px;top:722.62px;font-size:12.5px;line-height:12.5px;color:#242424;-webkit-text-stroke:0.3px #242424;">Rahul V.</div><div class="t" style="left:1133.00px;top:739.09px;font-size:11px;line-height:11px;color:#707070;">MFI Ops</div><div class="b" style="left:1249px;top:724px;width:95px;height:23px;background:#fde7e9;border:1px solid #ef8a93;border-radius:12px;"></div><div class="b" style="left:1259px;top:733px;width:6px;height:6px;background:#d13438;border-radius:50%;"></div><div class="t" style="left:1270.00px;top:730.69px;font-size:11px;line-height:11px;color:#c50f1f;-webkit-text-stroke:0.25px #c50f1f;">Errors Found</div><div class="b" style="left:1412px;top:725.5px;width:47px;height:21px;background:#fde7e9;border:1px solid #ef8a93;border-radius:11px;"></div><svg class="b" style="left:1422px;top:731.5px;" width="9" height="9" viewBox="0 0 9 9" fill="none"><path d="M4.5 0.8L8.6 8.2H0.4z" fill="none" stroke="#c50f1f" stroke-width="1.1" stroke-linejoin="round"/><path d="M4.5 3.4v2.4M4.5 6.6v.7" stroke="#c50f1f" stroke-width="1.1"/></svg><div class="t" style="left:1433.00px;top:730.99px;font-size:11px;line-height:11px;color:#c50f1f;-webkit-text-stroke:0.3px #c50f1f;">606</div><div class="t" style="left:1525.50px;top:729.60px;font-size:13px;line-height:13px;color:#c50f1f;-webkit-text-stroke:0.35px #c50f1f;">2</div><div class="b" style="left:1561px;top:734px;width:37px;height:4px;background:#ebebeb;border-radius:2px;"></div><div class="b" style="left:1561px;top:734px;width:5px;height:4px;background:#d13438;border-radius:2px;"></div><div class="b" style="left:244px;top:763px;width:1368px;height:54px;background:#fff;border-bottom:1px solid #edebe9;"></div><div class="b" style="left:258px;top:782px;width:16px;height:16px;border:1px solid #605e5c;border-radius:2px;background:#fff;"></div><div class="t" style="left:302.50px;top:776.62px;font-size:12.5px;line-height:12.5px;color:#242424;-webkit-text-stroke:0.3px #242424;">EQF-DEC-2024-02</div><div class="t" style="left:302.50px;top:793.89px;font-size:11px;line-height:11px;color:#707070;">Home loan portfolio</div><div class="b" style="left:560px;top:780px;width:53px;height:21px;background:#f3f2f1;border-radius:2px;border:1px solid #e1dfdd;box-sizing:border-box;font-size:11px;line-height:19px;color:#424242;text-align:center;white-space:nowrap;">Equifax</div><div class="b" style="left:675px;top:780px;width:74px;height:21px;background:#f3f2f1;border-radius:2px;border:1px solid #e1dfdd;box-sizing:border-box;font-size:11px;line-height:19px;color:#424242;text-align:center;white-space:nowrap;">Home Loan</div><div class="t" style="left:813.00px;top:776.11px;font-size:12px;line-height:12px;color:#242424;font-family:'Liberation Mono',monospace;-webkit-text-stroke:0.2px #242424;">62,480</div><div class="t" style="left:813.00px;top:791.49px;font-size:11px;line-height:11px;color:#707070;">records</div><div class="t" style="left:926.60px;top:776.60px;font-size:13px;line-height:13px;color:#242424;-webkit-text-stroke:0.3px #242424;">04 Dec 2025</div><div class="t" style="left:926.60px;top:793.69px;font-size:11px;line-height:11px;color:#707070;">2 days left</div><div class="b" style="left:1010px;top:779px;width:8px;height:8px;background:#d13438;border-radius:50%;"></div><div class="b" style="left:1100px;top:777px;width:26px;height:26px;background:#c50f1f;border-radius:13.0px;font-size:10px;line-height:26px;color:#fff;text-align:center;white-space:nowrap;font-weight:700;">PS</div><div class="t" style="left:1133.00px;top:776.62px;font-size:12.5px;line-height:12.5px;color:#242424;-webkit-text-stroke:0.3px #242424;">Preethi S.</div><div class="t" style="left:1133.00px;top:793.09px;font-size:11px;line-height:11px;color:#707070;">Loans</div><div class="b" style="left:1249px;top:778px;width:81px;height:23px;background:#fff4ce;border:1px solid #fbd300;border-radius:12px;"></div><div class="b" style="left:1259px;top:787px;width:6px;height:6px;background:#c87d0a;border-radius:50%;"></div><div class="t" style="left:1270.00px;top:784.69px;font-size:11px;line-height:11px;color:#c87d0a;-webkit-text-stroke:0.25px #c87d0a;">Validating</div><div class="b" style="left:1412px;top:779.5px;width:47px;height:21px;background:#fde7e9;border:1px solid #ef8a93;border-radius:11px;"></div><svg class="b" style="left:1422px;top:785.5px;" width="9" height="9" viewBox="0 0 9 9" fill="none"><path d="M4.5 0.8L8.6 8.2H0.4z" fill="none" stroke="#c50f1f" stroke-width="1.1" stroke-linejoin="round"/><path d="M4.5 3.4v2.4M4.5 6.6v.7" stroke="#c50f1f" stroke-width="1.1"/></svg><div class="t" style="left:1433.00px;top:784.99px;font-size:11px;line-height:11px;color:#c50f1f;-webkit-text-stroke:0.3px #c50f1f;">412</div><div class="t" style="left:1525.50px;top:783.60px;font-size:13px;line-height:13px;color:#c50f1f;-webkit-text-stroke:0.35px #c50f1f;">2</div><div class="b" style="left:1561px;top:788px;width:37px;height:4px;background:#ebebeb;border-radius:2px;"></div><div class="b" style="left:1561px;top:788px;width:5px;height:4px;background:#d13438;border-radius:2px;"></div><div class="b" style="left:244px;top:817px;width:1368px;height:54px;background:#fff;border-bottom:1px solid #edebe9;"></div><div class="b" style="left:258px;top:836px;width:16px;height:16px;border:1px solid #605e5c;border-radius:2px;background:#fff;"></div><div class="t" style="left:302.50px;top:830.62px;font-size:12.5px;line-height:12.5px;color:#242424;-webkit-text-stroke:0.3px #242424;">EXP-DEC-2024-01</div><div class="t" style="left:302.50px;top:847.89px;font-size:11px;line-height:11px;color:#707070;">SME / LAP portfolio</div><div class="b" style="left:560px;top:834px;width:59px;height:21px;background:#f3f2f1;border-radius:2px;border:1px solid #e1dfdd;box-sizing:border-box;font-size:11px;line-height:19px;color:#424242;text-align:center;white-space:nowrap;">Experian</div><div class="b" style="left:675px;top:834px;width:38px;height:21px;background:#f3f2f1;border-radius:2px;border:1px solid #e1dfdd;box-sizing:border-box;font-size:11px;line-height:19px;color:#424242;text-align:center;white-space:nowrap;">SME</div><div class="t" style="left:813.00px;top:830.11px;font-size:12px;line-height:12px;color:#242424;font-family:'Liberation Mono',monospace;-webkit-text-stroke:0.2px #242424;">38,640</div><div class="t" style="left:813.00px;top:845.49px;font-size:11px;line-height:11px;color:#707070;">records</div><div class="t" style="left:926.60px;top:838.30px;font-size:13px;line-height:13px;color:#242424;-webkit-text-stroke:0.3px #242424;">07 Dec 2025</div><div class="b" style="left:1100px;top:831px;width:26px;height:26px;background:#0f6cbd;border-radius:13.0px;font-size:10px;line-height:26px;color:#fff;text-align:center;white-space:nowrap;font-weight:700;">KN</div><div class="t" style="left:1133.00px;top:830.62px;font-size:12.5px;line-height:12.5px;color:#242424;-webkit-text-stroke:0.3px #242424;">Kiran N.</div><div class="t" style="left:1133.00px;top:847.09px;font-size:11px;line-height:11px;color:#707070;">SME Ops</div><div class="b" style="left:1249px;top:832px;width:87px;height:23px;background:#ebf3fc;border:1px solid #c7dff5;border-radius:12px;"></div><div class="b" style="left:1259px;top:841px;width:6px;height:6px;background:#0f6cbd;border-radius:50%;"></div><div class="t" style="left:1270.00px;top:838.69px;font-size:11px;line-height:11px;color:#0f6cbd;-webkit-text-stroke:0.25px #0f6cbd;">In Progress</div><div class="b" style="left:1412px;top:845px;width:13px;height:1px;background:#707070;"></div><div class="t" style="left:1525.50px;top:837.60px;font-size:13px;line-height:13px;color:#c87d0a;-webkit-text-stroke:0.35px #c87d0a;">5</div><div class="b" style="left:1561px;top:842px;width:37px;height:4px;background:#ebebeb;border-radius:2px;"></div><div class="b" style="left:1561px;top:842px;width:10px;height:4px;background:#c87d0a;border-radius:2px;"></div><div class="b" style="left:244px;top:871px;width:1368px;height:54px;background:#fff;border-bottom:1px solid #edebe9;"></div><div class="b" style="left:258px;top:890px;width:16px;height:16px;border:1px solid #605e5c;border-radius:2px;background:#fff;"></div><div class="t" style="left:302.50px;top:884.62px;font-size:12.5px;line-height:12.5px;color:#242424;-webkit-text-stroke:0.3px #242424;">CIBIL-DEC-2024-02</div><div class="t" style="left:302.50px;top:901.89px;font-size:11px;line-height:11px;color:#707070;">Commercial credit · MFI segment</div><div class="b" style="left:560px;top:888px;width:41px;height:21px;background:#ebf3fc;border-radius:2px;border:1px solid #c7e0f4;box-sizing:border-box;font-size:11px;line-height:19px;color:#0f6cbd;text-align:center;white-space:nowrap;">CIBIL</div><div class="b" style="left:675px;top:888px;width:76px;height:21px;background:#f3f2f1;border-radius:2px;border:1px solid #e1dfdd;box-sizing:border-box;font-size:11px;line-height:19px;color:#424242;text-align:center;white-space:nowrap;">Commercial</div><div class="t" style="left:813.00px;top:884.11px;font-size:12px;line-height:12px;color:#242424;font-family:'Liberation Mono',monospace;-webkit-text-stroke:0.2px #242424;">84,200</div><div class="t" style="left:813.00px;top:899.49px;font-size:11px;line-height:11px;color:#707070;">records</div><div class="t" style="left:926.60px;top:892.30px;font-size:13px;line-height:13px;color:#242424;-webkit-text-stroke:0.3px #242424;">10 Dec 2025</div><div class="b" style="left:1100px;top:885px;width:26px;height:26px;background:#8b3ddb;border-radius:13.0px;font-size:10px;line-height:26px;color:#fff;text-align:center;white-space:nowrap;font-weight:700;">DK</div><div class="t" style="left:1133.00px;top:884.62px;font-size:12.5px;line-height:12.5px;color:#242424;-webkit-text-stroke:0.3px #242424;">Deepa K.</div><div class="t" style="left:1133.00px;top:901.09px;font-size:11px;line-height:11px;color:#707070;">Data Ops</div><div class="b" style="left:1249px;top:886px;width:87px;height:23px;background:#ebf3fc;border:1px solid #c7dff5;border-radius:12px;"></div><div class="b" style="left:1259px;top:895px;width:6px;height:6px;background:#0f6cbd;border-radius:50%;"></div><div class="t" style="left:1270.00px;top:892.69px;font-size:11px;line-height:11px;color:#0f6cbd;-webkit-text-stroke:0.25px #0f6cbd;">In Progress</div><div class="b" style="left:1412px;top:899px;width:13px;height:1px;background:#707070;"></div><div class="t" style="left:1525.50px;top:891.60px;font-size:13px;line-height:13px;color:#242424;-webkit-text-stroke:0.35px #242424;">8</div><div class="b" style="left:1561px;top:896px;width:37px;height:4px;background:#ebebeb;border-radius:2px;"></div><div class="b" style="left:1561px;top:896px;width:14px;height:4px;background:#0f6cbd;border-radius:2px;"></div><div class="b" style="left:244px;top:925px;width:1368px;height:10px;background:#fff;"></div><div class="b" style="left:1625px;top:566px;width:256px;height:309px;background:#fff;border:1px solid #e1dfdd;border-radius:4px;box-shadow:0 1px 2px rgba(0,0,0,0.05);"></div><div class="t" style="left:1640.00px;top:580.97px;font-size:13.5px;line-height:13.5px;color:#242424;-webkit-text-stroke:0.45px #242424;">Quick Actions</div><div class="b" style="left:1626px;top:604px;width:254px;height:1px;background:#edebe9;"></div><div class="b" style="left:1640px;top:617px;width:30px;height:30px;background:#ebf3fc;border-radius:4px;"></div><svg class="b" style="left:1647px;top:624px;" width="16" height="16" viewBox="0 0 16 16" fill="none"><path d="M1.6 4.2h12.6v11.6H1.6z" fill="#e9e2ef"/><path d="M2.8 5.2h10.4v7.4H2.8z" fill="#2f80d6"/><path d="M1.4 12.6h12.6v3.2H1.4z" fill="#c2aee0"/><path d="M6.2 12.6h3.4l-.6 1.2H6.8z" fill="#2f80d6"/><path d="M8 0.6l3.2 3.4H9.1v3.8H6.9V4H4.8z" fill="#e4245a"/></svg><div class="t" style="left:1680.40px;top:618.20px;font-size:13px;line-height:13px;color:#242424;-webkit-text-stroke:0.4px #242424;">New Submission</div><div class="t" style="left:1680.40px;top:636.19px;font-size:11px;line-height:11px;color:#707070;">Upload batch file</div><svg class="b" style="left:1861px;top:630px;" width="5" height="7" viewBox="0 0 5 7" fill="none"><path d="M.7 .7L4 3.5.7 6.3" stroke="#a19f9d" stroke-width="1" fill="none"/></svg><div class="b" style="left:1626px;top:658px;width:254px;height:1px;background:#edebe9;"></div><div class="b" style="left:1640px;top:671px;width:30px;height:30px;background:#fde7e9;border-radius:4px;"></div><svg class="b" style="left:1647px;top:678px;" width="16" height="16" viewBox="0 0 16 16" fill="none"><path transform="translate(16 0) scale(-1 1)" d="M11.8 2.2a2.6 2.6 0 0 0-3.3 3.3L3 11a1 1 0 0 0 1.4 1.4l5.5-5.5a2.6 2.6 0 0 0 3.3-3.3l-1.5 1.5-1.3-.3-.3-1.3z" fill="#b6b0dc"/></svg><div class="t" style="left:1680.40px;top:672.20px;font-size:13px;line-height:13px;color:#242424;-webkit-text-stroke:0.4px #242424;">Resolve Errors</div><div class="t" style="left:1680.40px;top:690.19px;font-size:11px;line-height:11px;color:#707070;">5 batches need fix</div><svg class="b" style="left:1861px;top:684px;" width="5" height="7" viewBox="0 0 5 7" fill="none"><path d="M.7 .7L4 3.5.7 6.3" stroke="#a19f9d" stroke-width="1" fill="none"/></svg><div class="b" style="left:1626px;top:712px;width:254px;height:1px;background:#edebe9;"></div><div class="b" style="left:1640px;top:725px;width:30px;height:30px;background:#e0f5e0;border-radius:4px;"></div><svg class="b" style="left:1647px;top:732px;" width="16" height="16" viewBox="0 0 16 16" fill="none"><rect x="3" y="2.5" width="10" height="12" rx="1" fill="#d48a4a"/><rect x="4.3" y="4" width="7.4" height="9.5" fill="#f4ecdf"/><rect x="6" y="1.5" width="4" height="2.5" rx=".6" fill="#8a8f99"/><path d="M5.5 7h5M5.5 9h5M5.5 11h3.5" stroke="#b9b2c8" stroke-width=".8"/></svg><div class="t" style="left:1680.40px;top:726.20px;font-size:13px;line-height:13px;color:#242424;-webkit-text-stroke:0.4px #242424;">Resubmit Rejected</div><div class="t" style="left:1680.40px;top:744.19px;font-size:11px;line-height:11px;color:#707070;">CIBIL-DEC-2024-01</div><svg class="b" style="left:1861px;top:738px;" width="5" height="7" viewBox="0 0 5 7" fill="none"><path d="M.7 .7L4 3.5.7 6.3" stroke="#a19f9d" stroke-width="1" fill="none"/></svg><div class="b" style="left:1626px;top:766px;width:254px;height:1px;background:#edebe9;"></div><div class="b" style="left:1640px;top:779px;width:30px;height:30px;background:#f0efee;border-radius:4px;"></div><svg class="b" style="left:1647px;top:786px;" width="16" height="16" viewBox="0 0 16 16" fill="none"><rect x="2.5" y="3" width="11" height="11" rx="1.5" fill="#d9cff0"/><rect x="2.5" y="3" width="11" height="3" rx="1" fill="#2f86e0"/><g fill="#8c7fb8"><rect x="4.3" y="7.5" width="1.6" height="1.4"/><rect x="7.2" y="7.5" width="1.6" height="1.4"/><rect x="10.1" y="7.5" width="1.6" height="1.4"/><rect x="4.3" y="10.3" width="1.6" height="1.4"/><rect x="7.2" y="10.3" width="1.6" height="1.4"/><rect x="10.1" y="10.3" width="1.6" height="1.4"/></g></svg><div class="t" style="left:1680.40px;top:780.20px;font-size:13px;line-height:13px;color:#242424;-webkit-text-stroke:0.4px #242424;">Submission Calendar</div><div class="t" style="left:1680.40px;top:798.19px;font-size:11px;line-height:11px;color:#707070;">Bureau deadlines</div><svg class="b" style="left:1861px;top:792px;" width="5" height="7" viewBox="0 0 5 7" fill="none"><path d="M.7 .7L4 3.5.7 6.3" stroke="#a19f9d" stroke-width="1" fill="none"/></svg><div class="b" style="left:1626px;top:820px;width:254px;height:1px;background:#edebe9;"></div><div class="b" style="left:1640px;top:833px;width:30px;height:30px;background:#fff4ce;border-radius:4px;"></div><svg class="b" style="left:1647px;top:840px;" width="16" height="16" viewBox="0 0 16 16" fill="none"><path d="M3.5 1.5h6l3 3v10h-9z" fill="#e4dcf2"/><path d="M9.5 1.5v3h3" fill="#c9bde3"/><path d="M5.3 7.5h5.4M5.3 9.5h5.4M5.3 11.5h4" stroke="#a99cc8" stroke-width=".8"/></svg><div class="t" style="left:1680.40px;top:834.20px;font-size:13px;line-height:13px;color:#242424;-webkit-text-stroke:0.4px #242424;">Generate MIS Report</div><div class="t" style="left:1680.40px;top:852.19px;font-size:11px;line-height:11px;color:#707070;">PDF / Excel</div><svg class="b" style="left:1861px;top:846px;" width="5" height="7" viewBox="0 0 5 7" fill="none"><path d="M.7 .7L4 3.5.7 6.3" stroke="#a19f9d" stroke-width="1" fill="none"/></svg><div class="b" style="left:1625px;top:887px;width:256px;height:60px;background:#fff;border:1px solid #e1dfdd;border-radius:4px;"></div><div class="t" style="left:1640.00px;top:902.07px;font-size:13.5px;line-height:13.5px;color:#242424;-webkit-text-stroke:0.45px #242424;">Recent Activity</div><div class="t" style="left:1814.40px;top:903.61px;font-size:10.5px;line-height:10.5px;color:#707070;">Last 48 hrs</div><div class="b" style="left:1626px;top:925px;width:254px;height:1px;background:#edebe9;"></div>
</body></html>
